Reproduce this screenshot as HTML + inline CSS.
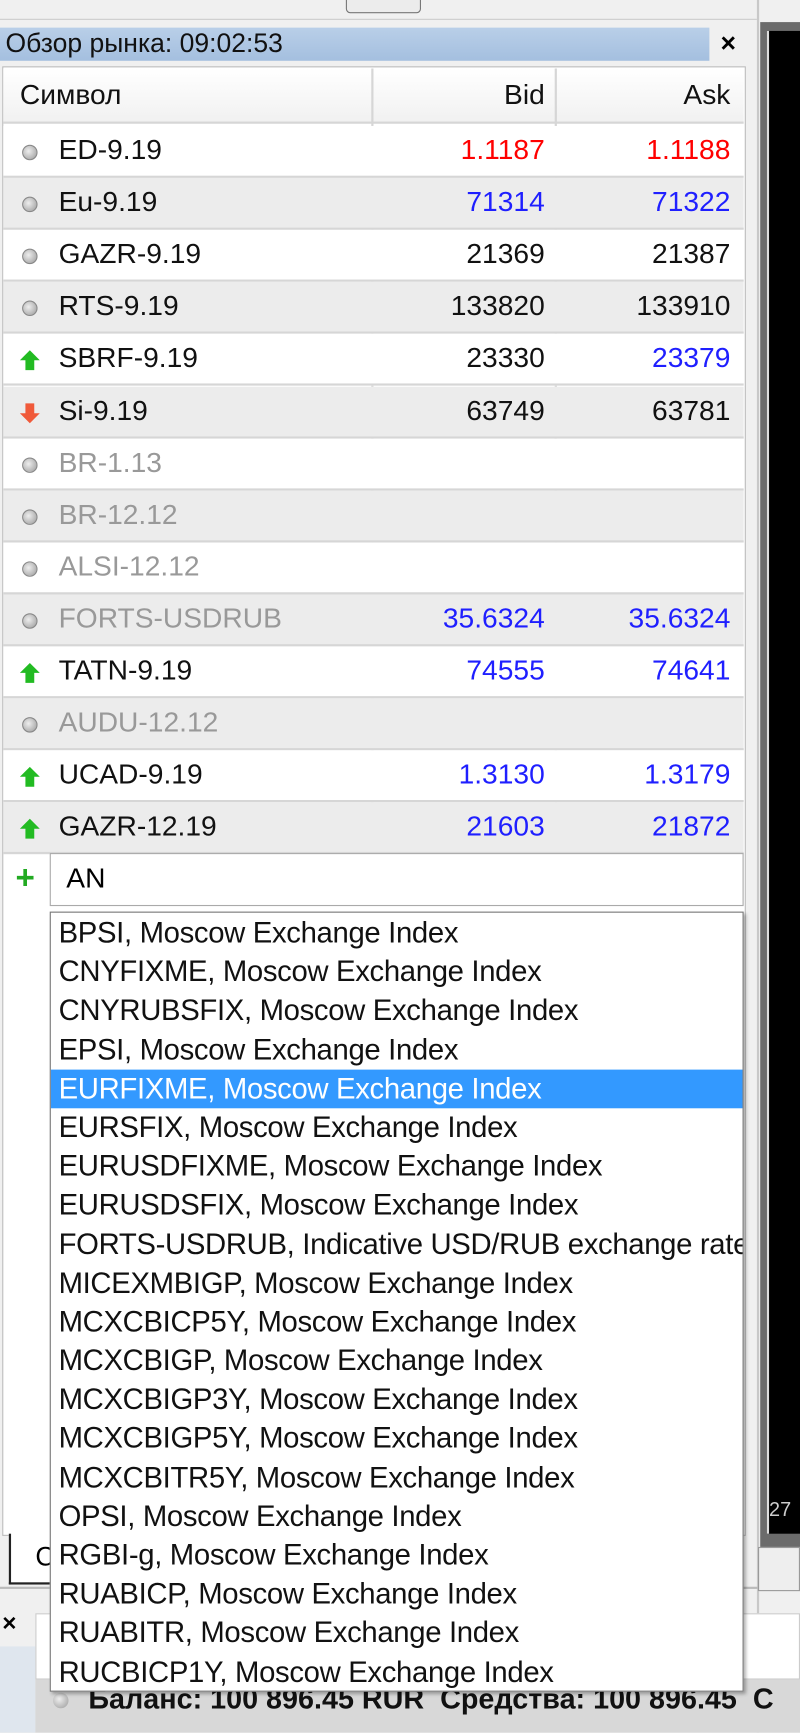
<!DOCTYPE html><html><head><meta charset="utf-8"><style>
*{margin:0;padding:0;box-sizing:border-box}
html,body{width:800px;height:1732px;overflow:hidden;background:#f0f0f0}
#w{position:absolute;left:0;top:0;width:724px;height:1568px;transform:scale(1.10497);transform-origin:0 0;font-family:"Liberation Sans",sans-serif;background:#f0f0f0}
.a{position:absolute}
.row{position:absolute;left:3px;width:670px;height:47px;border-bottom:2px solid #d6d6d6;font-size:25.5px;color:#111}
.row span{position:absolute;top:8px}
.s{left:50px}.b{right:180px;text-align:right}.k{right:12px;text-align:right}
.g{color:#999}.r{color:#f00}.bl{color:#1f1fff}
.ico{position:absolute;left:17px;top:17px;width:14px;height:14px;border-radius:50%;background:radial-gradient(circle at 40% 40%,#eee,#999);border:1px solid #888}
.dd div{height:35.2px;line-height:35px;padding-left:7px;font-size:26.5px;color:#111;white-space:nowrap;letter-spacing:-0.3px}
</style></head><body><div id="w">
<div class="a" style="left:0;top:0;width:685px;height:18px;background:#f0f0f0;border-bottom:1px solid #ccc"></div>
<div class="a" style="left:313px;top:-4px;width:68px;height:16px;border:1px solid #777;border-radius:4px;background:#ececec"></div>
<div class="a" style="left:685px;top:0;width:2px;height:1568px;background:#c8c8c8"></div>
<div class="a" style="left:688px;top:20px;width:36px;height:1380px;background:#6b6b6b"></div>
<div class="a" style="left:694px;top:28px;width:30px;height:1360px;background:#000;border-left:2px solid #ddd"></div>
<div class="a" style="left:696px;top:1356px;width:28px;height:30px;color:#ccc;font-size:18px">27</div>
<div class="a" style="left:0;top:25px;width:642px;height:30px;background:linear-gradient(#b9cfe8,#a4bfdf);font-size:24px;line-height:30px;padding-left:5px;color:#111">Обзор рынка: 09:02:53</div>
<div class="a" style="left:652px;top:25px;font-size:24px;font-weight:bold;line-height:30px">×</div>
<div class="a" style="left:2px;top:60px;width:673px;height:1330px;background:#fff;border:1px solid #bbb"></div>
<div class="row" style="top:62px;height:50px;background:linear-gradient(#fff,#f1f1f1)"><span class="s" style="left:15px;top:10px">Символ</span><span class="b" style="top:10px">Bid</span><span class="k" style="top:10px">Ask</span></div>
<div class="a" style="left:336px;top:62px;width:2px;height:708px;background:#d6d6d6"></div>
<div class="a" style="left:502px;top:62px;width:2px;height:708px;background:#d6d6d6"></div>
<div id="rows"></div>
<div class="a" style="left:14px;top:778px;color:#2a2;font-size:30px;font-weight:bold;line-height:34px">+</div>
<div class="a" style="left:45px;top:772px;width:628px;height:48px;border:1px solid #aaa;background:#fff;font-size:25.5px;padding:8px 0 0 14px">AN</div>
<div class="a" style="left:8px;top:1388px;width:40px;height:46px;border:2px solid #222;border-top:none;border-right:none;background:#fff;font-size:24px;padding:8px 0 0 22px">C</div>
<div class="a" style="left:0;top:1436px;width:724px;height:2px;background:#bbb"></div>
<div class="a" style="left:686px;top:1400px;width:38px;height:40px;border:1px solid #999;background:#eee"></div>
<div class="a" style="left:2px;top:1456px;font-size:22px;font-weight:bold">×</div>
<div class="a" style="left:0;top:1490px;width:32px;height:78px;background:#dfe6ee"></div>
<div class="a" style="left:32px;top:1460px;width:692px;height:60px;background:#fff;border:1px solid #ccc"></div>
<div class="a" style="left:32px;top:1520px;width:692px;height:48px;background:#d8d8d8"></div>
<div class="a" style="left:48px;top:1532px;width:14px;height:14px;border-radius:50%;background:radial-gradient(circle at 40% 40%,#eee,#999)"></div>
<div class="a" style="left:80px;top:1522px;font-size:26px;font-weight:bold;white-space:nowrap;color:#111">Баланс: 100 896.45 RUR&nbsp; Средства: 100 896.45&nbsp; С</div>
<div class="a dd" style="left:45px;top:825px;width:628px;height:706px;border:1px solid #777;background:#fff;padding-top:1px;overflow:hidden;z-index:10;box-shadow:2px 2px 3px rgba(0,0,0,.3)">
<div>BPSI, Moscow Exchange Index</div><div>CNYFIXME, Moscow Exchange Index</div><div>CNYRUBSFIX, Moscow Exchange Index</div><div>EPSI, Moscow Exchange Index</div><div style="background:#3399ff;color:#fff">EURFIXME, Moscow Exchange Index</div><div>EURSFIX, Moscow Exchange Index</div><div>EURUSDFIXME, Moscow Exchange Index</div><div>EURUSDSFIX, Moscow Exchange Index</div><div>FORTS-USDRUB, Indicative USD/RUB exchange rate</div><div>MICEXMBIGP, Moscow Exchange Index</div><div>MCXCBICP5Y, Moscow Exchange Index</div><div>MCXCBIGP, Moscow Exchange Index</div><div>MCXCBIGP3Y, Moscow Exchange Index</div><div>MCXCBIGP5Y, Moscow Exchange Index</div><div>MCXCBITR5Y, Moscow Exchange Index</div><div>OPSI, Moscow Exchange Index</div><div>RGBI-g, Moscow Exchange Index</div><div>RUABICP, Moscow Exchange Index</div><div>RUABITR, Moscow Exchange Index</div><div>RUCBICP1Y, Moscow Exchange Index</div></div>
</div>
<script>
var d=[["ED-9.19","1.1187","1.1188","o","r"],["Eu-9.19","71314","71322","o","bl"],["GAZR-9.19","21369","21387","o",""],["RTS-9.19","133820","133910","o",""],["SBRF-9.19","23330","23379","u","","bl"],["Si-9.19","63749","63781","d",""],["BR-1.13","","","o","","","g"],["BR-12.12","","","o","","","g"],["ALSI-12.12","","","o","","","g"],["FORTS-USDRUB","35.6324","35.6324","o","bl","","g"],["TATN-9.19","74555","74641","u","bl"],["AUDU-12.12","","","o","","","g"],["UCAD-9.19","1.3130","1.3179","u","bl"],["GAZR-12.19","21603","21872","u","bl"]];
var h="";d.forEach(function(r,i){var ic=r[3]=="o"?'<i class="ico"></i>':r[3]=="u"?'<svg style="position:absolute;left:14px;top:14px" width="20" height="20" viewBox="0 0 20 20"><path d="M10 1L19 10H14V19H6V10H1Z" fill="#22bb22"/></svg>':'<svg style="position:absolute;left:14px;top:14px" width="20" height="20" viewBox="0 0 20 20"><path d="M10 19L19 10H14V1H6V10H1Z" fill="#f05a3a"/></svg>';
h+='<div class="row" style="top:'+(114+i*47.1)+'px;background:'+(i%2?'#ececec':'#fff')+'">'+ic+'<span class="s '+(r[6]||'')+'">'+r[0]+'</span><span class="b '+r[4]+'">'+r[1]+'</span><span class="k '+(r[5]||r[4])+'">'+r[2]+'</span></div>';});
document.getElementById("rows").outerHTML=h;
</script>
</body></html>
